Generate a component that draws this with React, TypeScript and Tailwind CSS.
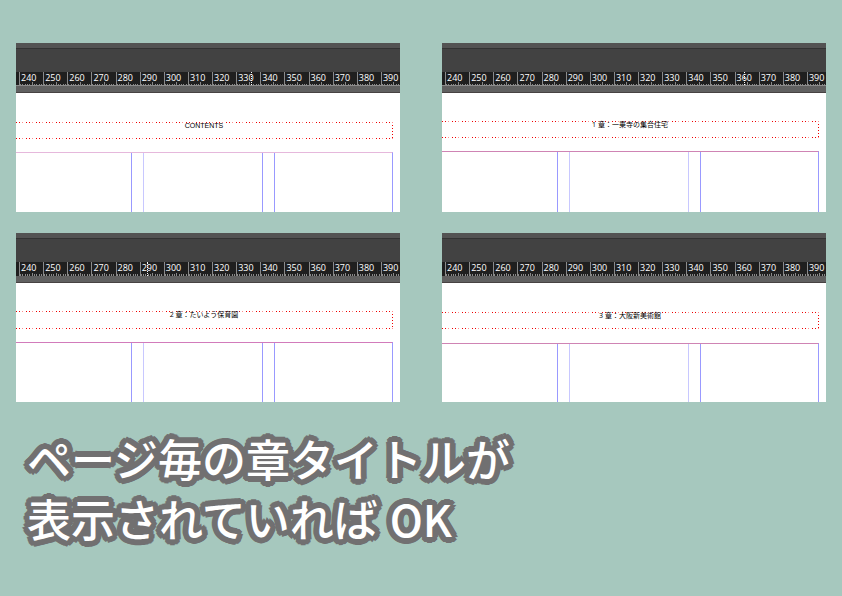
import React from "react";
import { clsx } from "clsx";

interface Sheet {
  title: string;
  titleClass?: string;
  frameClass: string;
  pageClass: string;
  gutterClass: string;
  // tick marks reach down over the edge of the ruler
  tall?: boolean;
  cursor?: { mark: number; className: string };
}

const marks = Array.from({ length: 16 }, (_, i) => 240 + i * 10);

const sheets: Sheet[] = [
  {
    title: "CONTENTS",
    titleClass: "font-['Liberation_Sans',sans-serif]",
    frameClass: "mt-[29px] h-[17px]",
    pageClass: "mt-[13px] border-t-[#e6b8dc]",
    gutterClass: "border-l-[#9999ff]",
    cursor: { mark: 330, className: "left-3.5" },
  },
  {
    title: "1 章：一乗寺の集合住宅",
    frameClass: "mt-[28px] h-[17px]",
    pageClass: "mt-[13px] border-t-[#cf84b4]",
    gutterClass: "border-l-[#c8c8ff]",
    cursor: { mark: 360, className: "left-2" },
  },
  {
    title: "2 章：たいよう保育園",
    frameClass: "mt-[28px] h-[18px]",
    pageClass: "mt-[13px] border-t-[#d27bbb]",
    gutterClass: "border-l-[#9999ff]",
    tall: true,
    cursor: { mark: 290, className: "left-1.5" },
  },
  {
    title: "3 章：大阪新美術館",
    frameClass: "mt-[29px] h-[17px]",
    pageClass: "mt-[14px] border-t-[#cf84b4]",
    gutterClass: "border-l-[#c8c8ff]",
    tall: true,
  },
];

const Ruler = ({ tall, cursor }: Pick<Sheet, "tall" | "cursor">) => {
  return (
    <div className="overflow-hidden bg-[#1f1f1f] pl-[3px]">
      <div className={clsx("-mr-[5px] flex", tall ? "h-[14px]" : "h-[13px]")}>
        {marks.map((mark) => (
          <div key={mark} className="relative flex min-w-0 flex-1 flex-col justify-between border-l border-[#8a8a8a]">
            <span className="pl-px text-[9px] leading-[12px] font-medium text-white">{mark}</span>
            <div className="-mt-1 flex h-[3px] items-end">
              {Array.from({ length: 10 }, (_, i) => (
                <span
                  key={i}
                  className={clsx("flex-1 border-l border-[#8a8a8a]", i === 5 ? "h-[3px]" : tall ? "h-[2px]" : "h-px")}
                />
              ))}
            </div>
            {cursor?.mark === mark && (
              <span className={clsx("absolute inset-y-0 border-l border-dotted border-white", cursor.className)} />
            )}
          </div>
        ))}
      </div>
    </div>
  );
};

const DottedRow = () => (
  <div className="h-px shrink-0 bg-[repeating-linear-gradient(90deg,#f00000_0_1px,transparent_1px_3px,#f00000_3px_4px,transparent_4px_6px,#ff9090_6px_7px,transparent_7px_10px)]" />
);

const DottedColumn = () => (
  <div className="w-px shrink-0 bg-[repeating-linear-gradient(180deg,transparent_0_2px,#f00000_2px_3px)]" />
);

const SheetView = ({ sheet }: { sheet: Sheet }) => {
  return (
    <section className="flex h-[169px] flex-col overflow-hidden bg-white">
      <div className="h-[5px] shrink-0 bg-[#535353]" />
      <div className="h-6 shrink-0 border-t border-[#333] bg-[#424242]" />
      <Ruler tall={sheet.tall} cursor={sheet.cursor} />
      <div
        className={clsx(
          "shrink-0 border-b border-[#474242] bg-[#606060]",
          sheet.tall ? "h-[7px]" : "h-2 border-t border-t-[#8c8c8c]"
        )}
      />
      <div className="flex flex-1 flex-col pr-[7px]">
        <div className={clsx("flex shrink-0 flex-col", sheet.frameClass)}>
          <DottedRow />
          <div className="flex flex-1">
            <h2 className={clsx("flex-1 text-center text-[7px] leading-[5px] text-black", sheet.titleClass)}>
              {sheet.title}
            </h2>
            <DottedColumn />
          </div>
          <DottedRow />
        </div>
        <div className={clsx("flex flex-1 border-t border-r border-r-[#9999ff]", sheet.pageClass)}>
          <div className="flex-[115]" />
          <div className="w-[13px] border-x border-l-[#9999ff] border-r-[#c8c8ff]" />
          <div className="flex-[118]" />
          <div className={clsx("w-[13px] border-x border-r-[#9999ff]", sheet.gutterClass)} />
          <div className="flex-[117]" />
        </div>
      </div>
    </section>
  );
};

const App = () => {
  return (
    <main className="min-h-screen bg-[#a6c8be] px-4 pt-[43px] font-['Open_Sans','Noto_Sans_CJK_JP',sans-serif]">
      <div className="grid grid-cols-2 gap-x-[42px] gap-y-[21px]">
        {sheets.map((sheet) => (
          <SheetView key={sheet.title} sheet={sheet} />
        ))}
      </div>
      <h1 className="mt-[26px] pl-[11px] font-['Noto_Sans_CJK_JP',sans-serif] text-[44px] leading-[60px] font-medium text-white [text-shadow:6px_0_#717071,5px_3px_#717071,4px_4px_#717071,3px_5px_#717071,0_6px_#717071,-3px_5px_#717071,-4px_4px_#717071,-5px_3px_#717071,-6px_0_#717071,-5px_-3px_#717071,-4px_-4px_#717071,-3px_-5px_#717071,0_-6px_#717071,3px_-5px_#717071,4px_-4px_#717071,5px_-3px_#717071,3px_0_#717071,0_3px_#717071,-3px_0_#717071,0_-3px_#717071]">
        ページ毎の章タイトルが
        <br />
        表示されていれば<span className="ml-3">OK</span>
      </h1>
    </main>
  );
};

export default App;
